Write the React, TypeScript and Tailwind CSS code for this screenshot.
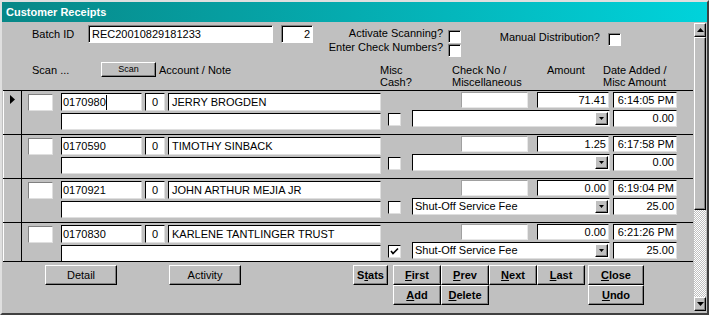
import React from 'react';

const font = "font-['Liberation_Sans',Arial,sans-serif]";
const field =
  'bg-white border border-t-black border-l-black border-r-[#dfdfdf] border-b-[#dfdfdf] text-[11px] leading-none flex items-center overflow-hidden whitespace-nowrap';
const deepField =
  'bg-white border border-t-[#808080] border-l-[#808080] border-r-white border-b-white shadow-[inset_1px_1px_0_#000] text-[11px] leading-none flex items-center overflow-hidden whitespace-nowrap';
const raised =
  'bg-[#c0c0c0] border border-t-white border-l-white border-r-black border-b-black shadow-[inset_-1px_-1px_0_#808080]';

type Rec = {
  acct: string;
  name: string;
  amt: string;
  time: string;
  misc: string;
  fee: string;
  checked?: boolean;
  current?: boolean;
};

const records: Rec[] = [
  { acct: '0170980', name: 'JERRY BROGDEN', amt: '71.41', time: '6:14:05 PM', misc: '0.00', fee: '', current: true },
  { acct: '0170590', name: 'TIMOTHY SINBACK', amt: '1.25', time: '6:17:58 PM', misc: '0.00', fee: '' },
  { acct: '0170921', name: 'JOHN ARTHUR MEJIA JR', amt: '0.00', time: '6:19:04 PM', misc: '25.00', fee: 'Shut-Off Service Fee' },
  { acct: '0170830', name: 'KARLENE TANTLINGER TRUST', amt: '0.00', time: '6:21:26 PM', misc: '25.00', fee: 'Shut-Off Service Fee', checked: true },
];

function CheckBox({ checked, deep }: { checked?: boolean; deep?: boolean }) {
  return (
    <div
      className={`w-[13px] h-[13px] shrink-0 bg-white border flex items-center justify-center ${
        deep
          ? 'border-t-[#808080] border-l-[#808080] border-r-white border-b-white shadow-[inset_1px_1px_0_#000]'
          : 'border-t-black border-l-black border-r-[#dfdfdf] border-b-[#dfdfdf]'
      }`}
    >
      {checked && (
        <svg width="9" height="9" viewBox="0 0 9 9">
          <path d="M1 4 L3 6.5 L8 1.5" fill="none" stroke="#000" strokeWidth="1.6" />
        </svg>
      )}
    </div>
  );
}

function NavButton({ u, rest, pre = '', w }: { u: string; rest: string; pre?: string; w: string }) {
  return (
    <div className={`${raised} ${w} h-[20px] flex items-center justify-center text-[11px] font-bold`}>
      {pre}
      <span className="underline">{u}</span>
      {rest}
    </div>
  );
}

function Row({ r }: { r: Rec }) {
  return (
    <div className="flex h-[44px] shrink-0 border-t border-black">
      {/* record selector */}
      <div className="w-[19px] shrink-0 border-l border-l-white border-r border-r-black flex justify-center pt-[4px]">
        {r.current && (
          <svg width="5" height="9" viewBox="0 0 5 9">
            <path d="M0 0 L5 4.5 L0 9 Z" fill="#000" />
          </svg>
        )}
      </div>

      {/* account / note */}
      <div className="w-[360px] shrink-0 flex flex-col">
        <div className="flex mt-[2px] h-[18px]">
          <div className="ml-[6px] mt-px w-[25px] h-[17px] bg-white border border-t-[#808080] border-l-[#808080] border-r-[#dfdfdf] border-b-[#dfdfdf]" />
          <div className={`ml-[8px] w-[81px] h-[18px] pl-[1px] ${field}`}>
            {r.acct}
            {r.current && <span className="inline-block w-px h-[15px] bg-black" />}
          </div>
          <div className={`ml-[3px] w-[20px] h-[18px] justify-center ${field}`}>0</div>
          <div className={`ml-[3px] w-[213px] h-[18px] pl-[3px] ${field}`}>{r.name}</div>
        </div>
        <div className={`ml-[39px] mt-[2px] w-[320px] h-[17px] ${field}`} />
      </div>

      {/* right side */}
      <div className="flex flex-col">
        <div className="flex mt-px h-[16px]">
          <div className="ml-[79px] w-[67px] h-[16px] bg-white border border-t-[#a0a0a0] border-l-[#a0a0a0] border-r-[#e8e8e8] border-b-[#e8e8e8]" />
          <div className={`ml-[9px] w-[72px] h-[16px] justify-end pr-[2px] ${field}`}>{r.amt}</div>
          <div className={`ml-[4px] w-[64px] h-[16px] justify-end pr-[2px] ${field}`}>{r.time}</div>
        </div>
        <div className="flex mt-[2px] h-[17px] items-start">
          <div className="ml-[6px] mt-[3px]">
            <CheckBox checked={r.checked} />
          </div>
          <div className={`ml-[11px] w-[198px] h-[17px] pl-[2px] justify-between ${field}`}>
            <span>{r.fee}</span>
            <div className={`${raised} w-[13px] h-[13px] mr-px flex items-center justify-center`}>
              <svg width="5" height="3" viewBox="0 0 5 3">
                <path d="M0 0 L5 0 L2.5 3 Z" fill="#000" />
              </svg>
            </div>
          </div>
          <div className={`ml-[3px] w-[64px] h-[17px] justify-end pr-[2px] ${field}`}>{r.misc}</div>
        </div>
      </div>
    </div>
  );
}

export default function App() {
  return (
    <div
      className={`w-[709px] h-[315px] bg-[#c0c0c0] border-2 border-t-[#dfdfdf] border-l-[#dfdfdf] border-r-[#404040] border-b-[#404040] flex flex-col text-black ${font}`}
    >
      {/* title bar */}
      <div className="h-[20px] shrink-0 bg-linear-to-r from-[#078787] to-[#00d3db] flex items-center pl-[4px] text-white font-bold text-[11px]">
        Customer Receipts
      </div>

      <div className="flex flex-1 min-h-0">
        {/* form */}
        <div className="w-[692px] shrink-0 flex flex-col text-[11px]">
          {/* header */}
          <div className="flex h-[40px] shrink-0">
            <div className="flex pt-[3px] ml-[30px]">
              <div className="w-[56px] leading-[18px]">Batch ID</div>
              <div className={`w-[185px] h-[18px] pl-[3px] ${deepField}`}>REC20010829181233</div>
              <div className={`ml-[8px] w-[32px] h-[18px] justify-end pr-[2px] ${deepField}`}>2</div>
            </div>
            <div className="w-[148px] flex flex-col pt-[5px]">
              <div className="flex justify-end items-start h-[14px]">
                <span className="leading-[13px]">Activate Scanning?</span>
                <div className="ml-[5px] mt-[3px]">
                  <CheckBox deep />
                </div>
              </div>
              <div className="flex justify-end items-start h-[14px]">
                <span className="leading-[13px] whitespace-nowrap">Enter Check Numbers?</span>
                <div className="ml-[5px] mt-[3px]">
                  <CheckBox deep />
                </div>
              </div>
            </div>
            <div className="w-[160px] flex justify-end items-start pt-[9px]">
              <span className="leading-[13px]">Manual Distribution?</span>
              <div className="ml-[8px] mt-[2px]">
                <CheckBox deep />
              </div>
            </div>
          </div>

          <div className="flex h-[28px] shrink-0 items-start">
            <div className="ml-[30px] w-[69px] mt-px leading-[14px]">Scan ...</div>
            <div className={`${raised} w-[55px] h-[15px] flex items-center justify-center text-[9px]`}>Scan</div>
            <div className="ml-[3px] w-[221px] mt-px leading-[14px]">Account / Note</div>
            <div className="w-[72px] mt-[2px] leading-[12px]">
              Misc
              <br />
              Cash?
            </div>
            <div className="w-[95px] mt-[2px] leading-[12px]">
              Check No /
              <br />
              Miscellaneous
            </div>
            <div className="w-[56px] mt-[2px] leading-[12px]">Amount</div>
            <div className="mt-[2px] leading-[12px]">
              Date Added /
              <br />
              Misc Amount
            </div>
          </div>

          {/* continuous records */}
          <div className="ml-px w-[690px] h-[172px] shrink-0 overflow-hidden border-b border-black flex flex-col">
            {records.map((r) => (
              <Row key={r.acct} r={r} />
            ))}
          </div>

          {/* footer buttons */}
          <div className="flex flex-col pt-[3px]">
            <div className="flex h-[20px]">
              <div className={`${raised} ml-[43px] w-[72px] h-[20px] flex items-center justify-center`}>Detail</div>
              <div className={`${raised} ml-[52px] w-[72px] h-[20px] flex items-center justify-center`}>Activity</div>
              <div className="ml-[112px]">
                <NavButton pre="S" u="t" rest="ats" w="w-[35px]" />
              </div>
              <div className="ml-[5px] flex">
                <NavButton u="F" rest="irst" w="w-[48px]" />
                <NavButton u="P" rest="rev" w="w-[48px]" />
                <NavButton u="N" rest="ext" w="w-[48px]" />
                <NavButton u="L" rest="ast" w="w-[48px]" />
              </div>
              <div className="ml-[3px]">
                <NavButton u="C" rest="lose" w="w-[56px]" />
              </div>
            </div>
            <div className="flex h-[20px]">
              <div className="ml-[391px] flex">
                <NavButton u="A" rest="dd" w="w-[48px]" />
                <NavButton u="D" rest="elete" w="w-[48px]" />
              </div>
              <div className="ml-[99px]">
                <NavButton u="U" rest="ndo" w="w-[56px]" />
              </div>
            </div>
          </div>
        </div>

        {/* scrollbar */}
        <div className="w-[12px] shrink-0 flex flex-col mt-px mb-[2px]">
          <div className={`${raised} h-[14px] shrink-0 flex items-center justify-center`}>
            <svg width="7" height="4" viewBox="0 0 7 4">
              <path d="M0 4 L7 4 L3.5 0 Z" fill="#000" />
            </svg>
          </div>
          <div className={`${raised} h-[173px] shrink-0`} />
          <div className="flex-1 bg-[repeating-conic-gradient(#c0c0c0_0%_25%,#ffffff_0%_50%)] bg-size-[2px_2px]" />
          <div className={`${raised} h-[14px] shrink-0 flex items-center justify-center`}>
            <svg width="7" height="4" viewBox="0 0 7 4">
              <path d="M0 0 L7 0 L3.5 4 Z" fill="#000" />
            </svg>
          </div>
        </div>
        <div className="w-px shrink-0" />
      </div>
    </div>
  );
}
